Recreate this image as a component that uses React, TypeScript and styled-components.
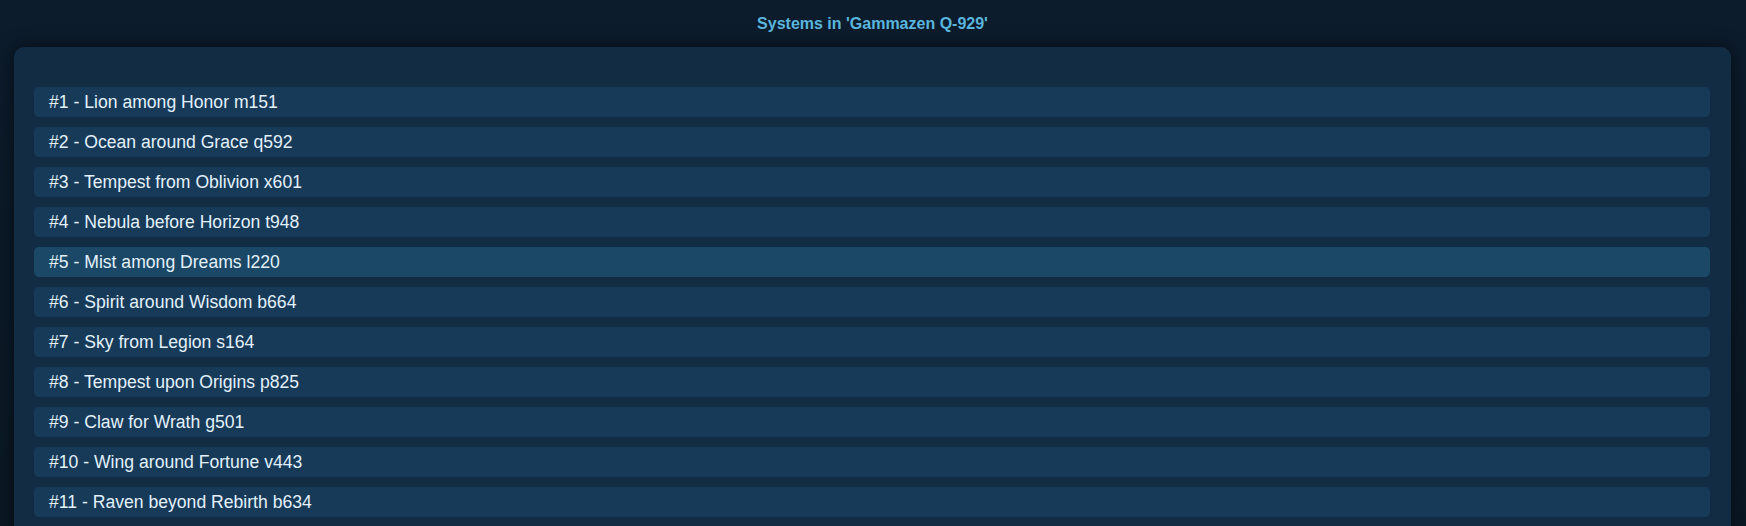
import React from "react";
import styled, { createGlobalStyle } from "styled-components";

const GlobalStyle = createGlobalStyle`
  html, body {
    margin: 0;
    padding: 0;
    background: #0b1a29;
    font-family: "Liberation Sans", Arial, sans-serif;
  }
`;

const Page = styled.div`
  min-height: 100vh;
  background: linear-gradient(180deg, #0c1c2c 0%, #0a1824 100%);
  padding: 0 15px 0 14px;
`;

const Title = styled.h1`
  margin: 0;
  height: 47px;
  display: flex;
  align-items: center;
  justify-content: center;
  font-size: 16px;
  font-weight: bold;
  color: #5ab5dd;
`;

const Panel = styled.section`
  background: #122c44;
  border-radius: 10px;
  padding: 40px 21px 20px 20px;
  box-shadow: 0 0 18px rgba(0, 0, 0, 0.55);
`;

const List = styled.ul`
  list-style: none;
  margin: 0;
  padding: 0;
  display: flex;
  flex-direction: column;
  gap: 10px;
`;

const Row = styled.li<{ $active?: boolean }>`
  height: 30px;
  display: flex;
  align-items: center;
  padding: 0 15px;
  border-radius: 5px;
  background: ${(p) => (p.$active ? "#1b4866" : "#173a59")};
  color: #e2f1fb;
  font-size: 17.6px;
`;

const systems = [
  "Lion among Honor m151",
  "Ocean around Grace q592",
  "Tempest from Oblivion x601",
  "Nebula before Horizon t948",
  "Mist among Dreams l220",
  "Spirit around Wisdom b664",
  "Sky from Legion s164",
  "Tempest upon Origins p825",
  "Claw for Wrath g501",
  "Wing around Fortune v443",
  "Raven beyond Rebirth b634",
];

export default function App() {
  return (
    <>
      <GlobalStyle />
      <Page>
        <Title>Systems in 'Gammazen Q-929'</Title>
        <Panel>
          <List>
            {systems.map((s, i) => (
              <Row key={i} $active={i === 4}>
                #{i + 1} - {s}
              </Row>
            ))}
          </List>
        </Panel>
      </Page>
    </>
  );
}
